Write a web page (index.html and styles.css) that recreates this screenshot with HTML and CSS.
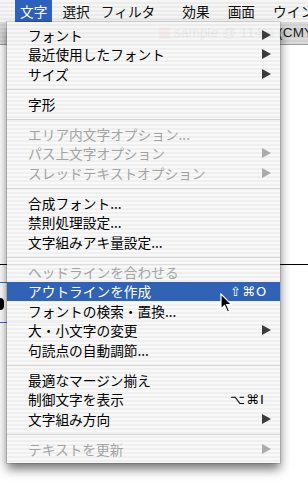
FILE: index.html
```html
<!DOCTYPE html>
<html>
<head>
    <title>文字メニュー</title>
    <link rel="stylesheet" href="styles.css">
</head>
<body>
    <div class="menubar">
        <span class="mb-item active">文字</span>
        <span class="mb-item">選択</span>
        <span class="mb-item">フィルタ</span>
        <span class="mb-item">効果</span>
        <span class="mb-item">画面</span>
        <span class="mb-item">ウインドウ</span>
    </div>

    <div class="window">
        <div class="titlebar">
            <span class="doc-icon"></span>
            <span>sample @ 114% (CMYK/プレビュー)</span>
        </div>
        <div class="canvas">
            <div class="art-line"></div>
            <div class="art-box"></div>
            <div class="art-glyph"></div>
        </div>
    </div>

    <div class="menu">
        <div class="item">フォント<svg class="arrow" viewBox="0 0 9 10"><polygon points="0,0 9,5 0,10"/></svg></div>
        <div class="item">最近使用したフォント<svg class="arrow" viewBox="0 0 9 10"><polygon points="0,0 9,5 0,10"/></svg></div>
        <div class="item">サイズ<svg class="arrow" viewBox="0 0 9 10"><polygon points="0,0 9,5 0,10"/></svg></div>
        <div class="sep"></div>
        <div class="item">字形</div>
        <div class="sep"></div>
        <div class="item disabled">エリア内文字オプション...</div>
        <div class="item disabled">パス上文字オプション<svg class="arrow" viewBox="0 0 9 10"><polygon points="0,0 9,5 0,10"/></svg></div>
        <div class="item disabled">スレッドテキストオプション<svg class="arrow" viewBox="0 0 9 10"><polygon points="0,0 9,5 0,10"/></svg></div>
        <div class="sep"></div>
        <div class="item">合成フォント...</div>
        <div class="item">禁則処理設定...</div>
        <div class="item">文字組みアキ量設定...</div>
        <div class="sep"></div>
        <div class="item disabled">ヘッドラインを合わせる</div>
        <div class="item selected">アウトラインを作成<span class="key">⇧⌘O</span></div>
        <div class="item">フォントの検索・置換...</div>
        <div class="item">大・小文字の変更<svg class="arrow" viewBox="0 0 9 10"><polygon points="0,0 9,5 0,10"/></svg></div>
        <div class="item">句読点の自動調節...</div>
        <div class="sep"></div>
        <div class="item">最適なマージン揃え</div>
        <div class="item">制御文字を表示<span class="key">⌥⌘I</span></div>
        <div class="item">文字組み方向<svg class="arrow" viewBox="0 0 9 10"><polygon points="0,0 9,5 0,10"/></svg></div>
        <div class="sep"></div>
        <div class="item disabled">テキストを更新<svg class="arrow" viewBox="0 0 9 10"><polygon points="0,0 9,5 0,10"/></svg></div>
    </div>

    <!-- mouse pointer -->
    <svg class="cursor" width="13" height="20" viewBox="0 0 13 20">
        <path d="M1,1 L1,16 L4.5,12.5 L7.5,19 L9.5,18 L6.7,11.7 L11.5,11.7 Z" fill="#000" stroke="#fff" stroke-width="1.2"/>
    </svg>
</body>
</html>
```

FILE: styles.css
```css
* {
    box-sizing: border-box;
}

body {
    margin: 0;
    width: 308px;
    height: 493px;
    overflow: hidden;
    position: relative;
    background: #fff;
    font-family: "Noto Sans CJK JP", sans-serif;
}

/* top menu bar */
.menubar {
    height: 22px;
    display: flex;
    padding-left: 15px;
    font-size: 13.7px;
    color: #111;
    white-space: nowrap;
    background: repeating-linear-gradient(#f5f5f5 0 2px, #ebebeb 2px 4px);
}

.mb-item {
    padding: 0 5px;
    line-height: 22px;
    margin-left: 5px;
}

.mb-item:first-child {
    margin-left: 0;
}

.mb-item:nth-child(3) {
    margin-left: 1px;
}

.mb-item:nth-child(4) {
    margin-left: 17px;
}

.mb-item:nth-child(5),
.mb-item:nth-child(6) {
    margin-left: 8px;
}

.mb-item.active {
    background: #2e60bd;
    color: #fff;
}

/* document window behind the menu */
.titlebar {
    height: 23px;
    display: flex;
    align-items: center;
    gap: 4px;
    padding-left: 159px;
    font-family: "Liberation Sans", sans-serif;
    font-size: 13.5px;
    letter-spacing: 0.15px;
    color: #1c1c1c;
    white-space: nowrap;
    background: repeating-linear-gradient(#dadada 0 2px, #d0d0d0 2px 4px);
    border-bottom: 1px solid #9c9c9c;
}

.doc-icon {
    flex: none;
    width: 11px;
    height: 12px;
    background: #d9534f;
    border: 1px solid #999;
}

.canvas {
    position: relative;
    height: 448px;
}

.art-line {
    position: absolute;
    left: 0;
    right: 0;
    top: 219px;
    height: 1px;
    background: #000;
}

.art-box {
    position: absolute;
    left: 0;
    top: 237px;
    width: 60px;
    height: 41px;
    border-top: 1px solid #3a68d8;
    border-bottom: 1px solid #3a68d8;
}

.art-glyph {
    position: absolute;
    left: -6px;
    top: 253px;
    width: 10px;
    height: 12px;
    border-radius: 4px;
    background: #000;
}

/* the open menu */
.menu {
    position: absolute;
    left: 7px;
    top: 22px;
    width: 273px;
    padding: 3px 0 4.5px;
    font-size: 13.7px;
    color: #000;
    background: repeating-linear-gradient(rgba(248, 248, 248, 0.93) 0 2px, rgba(238, 238, 238, 0.93) 2px 4px);
    box-shadow: 0 6px 10px rgba(0, 0, 0, 0.55), 0 0 0 1px rgba(0, 0, 0, 0.12);
}

.item {
    height: 19.5px;
    display: flex;
    align-items: center;
    padding: 0 9px 0 21px;
    white-space: nowrap;
}

.item.disabled {
    color: #a3a3a3;
}

.item.selected {
    background: #3062b6;
    color: #fff;
}

.arrow {
    width: 9px;
    height: 10px;
    margin-left: auto;
    fill: #3c3c3c;
}

.disabled .arrow {
    fill: #ababab;
}

.key {
    margin-left: auto;
    width: 41px;
    font-family: "DejaVu Sans", sans-serif;
    font-size: 13px;
    letter-spacing: 1px;
}

.sep {
    height: 1px;
    margin: 5px 0 4.5px;
    background: #d4d4d4;
}

.cursor {
    position: absolute;
    left: 220px;
    top: 293px;
}
```
